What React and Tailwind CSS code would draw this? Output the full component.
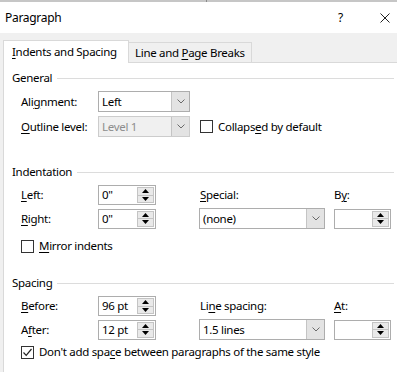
import React from 'react'

function U({ children }) {
  return <span className="underline underline-offset-[2px] decoration-1">{children}</span>
}

function Heading({ children, className = '' }) {
  return (
    <div className={`flex items-center h-4 pl-2 ${className}`}>
      <span>{children}</span>
      <div className="flex-1 h-px bg-[#dcdcdc] ml-[5px] mr-[3px]" />
    </div>
  )
}

function Chevron() {
  return (
    <svg width="8" height="5" viewBox="0 0 8 5">
      <path d="M0.5 0.5 L4 4 L7.5 0.5" fill="none" stroke="#6a6a6a" strokeWidth="1" />
    </svg>
  )
}

function Dropdown({ value, disabled, className = '' }) {
  return (
    <div
      className={`flex h-[21px] border ${
        disabled ? 'border-[#cccccc] bg-[#f0f0f0] text-[#8d8d8d]' : 'border-[#adadad] bg-white'
      } ${className}`}
    >
      <span className="flex-1 pl-[3px] leading-[19px]">{value}</span>
      <div className="w-[18px] flex items-center justify-center bg-[#e3e3e3] border-l border-[#c4c4c4]">
        <Chevron />
      </div>
    </div>
  )
}

function Tri({ down }) {
  return (
    <svg width="7" height="4" viewBox="0 0 7 4">
      <path d={down ? 'M0 0 L7 0 L3.5 4 Z' : 'M0 4 L7 4 L3.5 0 Z'} fill="#000" />
    </svg>
  )
}

function Spin({ value = '', className = '' }) {
  return (
    <div className={`flex h-5 border border-[#adadad] bg-white ${className}`}>
      <span className="flex-1 pl-[3px] leading-[18px]">{value}</span>
      <div className="w-[17px] flex flex-col my-px mr-px">
        <div className="flex-1 flex items-center justify-center bg-[#e9e9e9] border border-[#c4c4c4]">
          <Tri />
        </div>
        <div className="flex-1 flex items-center justify-center bg-[#e9e9e9] border border-t-0 border-[#c4c4c4]">
          <Tri down />
        </div>
      </div>
    </div>
  )
}

function Checkbox({ checked, className = '' }) {
  return (
    <div className={`w-[13px] h-[13px] border border-[#333333] bg-white flex items-center justify-center ${className}`}>
      {checked && (
        <svg width="11" height="11" viewBox="0 0 11 11">
          <path d="M1.5 5.5 L4.2 8.3 L9.5 2" fill="none" stroke="#222" strokeWidth="1.2" />
        </svg>
      )}
    </div>
  )
}

export default function App() {
  return (
    <div className="w-[397px] h-[372px] overflow-hidden bg-[#f0f0f0] flex flex-col text-[11.5px] tracking-[-0.3px] leading-4 text-black font-['Noto_Sans',sans-serif] whitespace-nowrap">
      {/* window edge behind */}
      <div className="h-[2px] bg-[#c6c6c6] flex">
        <div className="ml-[206px] w-px bg-[#8a8a8a]" />
      </div>

      {/* title bar */}
      <div className="h-[31px] bg-white flex items-center">
        <span className="pl-[5px] text-[12px]">Paragraph</span>
        <span className="ml-auto text-[12px]">?</span>
        <svg className="ml-[37px] mr-[7px]" width="10" height="10" viewBox="0 0 10 10">
          <path d="M0.5 0.5 L9.5 9.5 M9.5 0.5 L0.5 9.5" stroke="#222" strokeWidth="1" />
        </svg>
      </div>

      {/* tabs */}
      <div className="h-[29px] flex items-end pl-[3px]">
        <div className="relative z-10 -mb-px h-[23px] w-[126px] bg-white border-l border-t border-r border-[#d9d9d9] pl-2 flex items-center">
          <span><U>I</U>ndents and Spacing</span>
        </div>
        <div className="h-[20px] w-[123px] border-t border-r border-[#d9d9d9] pl-[6px] flex items-center">
          <span>Line and <U>P</U>age Breaks</span>
        </div>
      </div>

      {/* panel */}
      <div className="flex-1 ml-[3px] bg-white border-l border-t border-[#d9d9d9]">
        <Heading className="mt-[7px]">General</Heading>
        <div className="flex items-center mt-[5px] pl-[17px]">
          <span className="w-[77px]">Ali<U>g</U>nment:</span>
          <Dropdown value="Left" className="w-[92px]" />
        </div>
        <div className="flex items-center mt-1 pl-[17px]">
          <span className="w-[77px]"><U>O</U>utline level:</span>
          <Dropdown value="Level 1" disabled className="w-[92px]" />
          <Checkbox className="ml-[10px]" />
          <span className="ml-[5px]">Collaps<U>e</U>d by default</span>
        </div>

        <Heading className="mt-[27px]">Indentation</Heading>
        <div className="flex items-center h-5 mt-[5px] pl-[17px]">
          <span className="w-[77px]"><U>L</U>eft:</span>
          <div className="w-[101px]"><Spin value={'0"'} className="w-[58px]" /></div>
          <span className="w-[135px] pl-px"><U>S</U>pecial:</span>
          <span>B<U>y</U>:</span>
        </div>
        <div className="flex items-center h-[21px] mt-[3px] pl-[17px]">
          <span className="w-[77px]"><U>R</U>ight:</span>
          <div className="w-[101px]"><Spin value={'0"'} className="w-[58px]" /></div>
          <div className="w-[135px]"><Dropdown value="(none)" className="w-[126px]" /></div>
          <Spin className="w-[57px]" />
        </div>
        <div className="flex items-center h-4 mt-[9px] pl-[17px]">
          <Checkbox />
          <span className="ml-[5px]"><U>M</U>irror indents</span>
        </div>

        <Heading className="mt-[21px]">Spacing</Heading>
        <div className="flex items-center h-5 mt-[5px] pl-[17px]">
          <span className="w-[77px]"><U>B</U>efore:</span>
          <div className="w-[101px]"><Spin value="96 pt" className="w-[58px]" /></div>
          <span className="w-[135px] pl-px">Li<U>n</U>e spacing:</span>
          <span><U>A</U>t:</span>
        </div>
        <div className="flex items-center h-[21px] mt-[3px] pl-[17px]">
          <span className="w-[77px]">A<U>f</U>ter:</span>
          <div className="w-[101px]"><Spin value="12 pt" className="w-[58px]" /></div>
          <div className="w-[135px]"><Dropdown value="1.5 lines" className="w-[126px]" /></div>
          <Spin className="w-[57px]" />
        </div>
        <div className="flex items-center h-4 mt-1 pl-[17px]">
          <Checkbox checked />
          <span className="ml-[5px]">Don't add spa<U>c</U>e between paragraphs of the same style</span>
        </div>
      </div>
    </div>
  )
}
